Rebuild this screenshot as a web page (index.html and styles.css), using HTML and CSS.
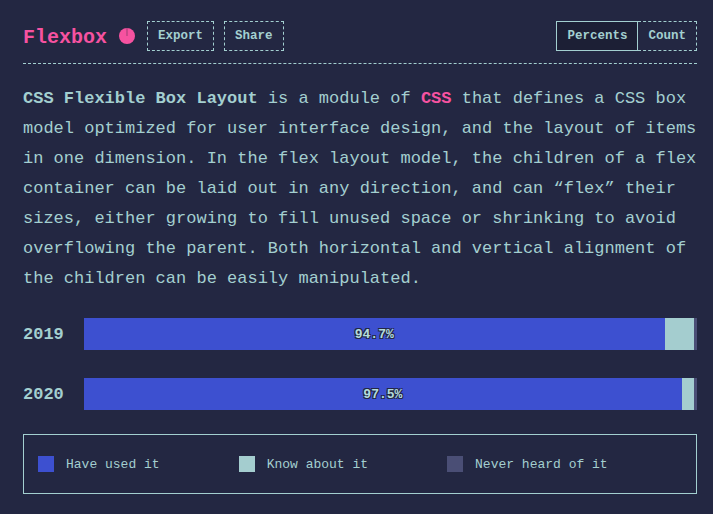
FILE: index.html
```html
<!DOCTYPE html>
<html>
  <head>
    <meta charset="UTF-8">
    <meta name="viewport" content="width=device-width, initial-scale=1.0">
    <title>Flexbox</title>
    <link rel="stylesheet" href="styles.css">
  </head>
  <body>
    <div id="block">
        <div id="header">
            <h2 class="title">Flexbox</h2>
            <svg class="pie" width="16" height="16" viewBox="0 0 16 16">
                <circle cx="8" cy="8" r="8" fill="#f652a0" />
                <line x1="8" y1="8" x2="8" y2="0" stroke="#7a3560" stroke-width="0.7" />
            </svg>
            <span class="btn">Export</span>
            <span class="btn">Share</span>
            <div class="switch">
                <span class="tab active">Percents</span>
                <span class="tab">Count</span>
            </div>
        </div>

        <p class="desc"><strong>CSS Flexible Box Layout</strong> is a module of <strong class="pink">CSS</strong> that defines a CSS box model optimized for user interface design, and the layout of items in one dimension. In the flex layout model, the children of a flex container can be laid out in any direction, and can “flex” their sizes, either growing to fill unused space or shrinking to avoid overflowing the parent. Both horizontal and vertical alignment of the children can be easily manipulated.</p>

        <div class="chart">
            <div class="row">
                <span class="year">2019</span>
                <div class="bar">
                    <div class="seg used" style="width: 94.7%"><span>94.7%</span></div>
                    <div class="seg know" style="width: 4.8%"></div>
                    <div class="seg never" style="width: 0.5%"></div>
                </div>
            </div>
            <div class="row">
                <span class="year">2020</span>
                <div class="bar">
                    <div class="seg used" style="width: 97.5%"><span>97.5%</span></div>
                    <div class="seg know" style="width: 2%"></div>
                    <div class="seg never" style="width: 0.5%"></div>
                </div>
            </div>
        </div>

        <div class="legend">
            <div class="item"><span class="swatch used"></span>Have used it</div>
            <div class="item"><span class="swatch know"></span>Know about it</div>
            <div class="item"><span class="swatch never"></span>Never heard of it</div>
        </div>
    </div>
  </body>
</html>
```

FILE: styles.css
```css
body {
    background-color: #232742;
    color: #a3cfd0;
    font-family: "Liberation Mono", "DejaVu Sans Mono", monospace;
    margin: 0;
    padding: 0;
}

#block {
    padding: 21px 16px 0 23px;
}

#header {
    display: flex;
    flex-direction: row;
    align-items: center;
    padding-bottom: 12px;
    border-bottom: 1px dashed #a3cfd0;
}

.title {
    margin: 0;
    font-size: 20px;
    font-weight: bold;
    color: #f652a0;
    position: relative;
    top: 1px;
}

.pie {
    margin: 0 12px 0 12px;
}

.btn {
    display: flex;
    align-items: center;
    height: 28px;
    padding: 0 10px;
    border: 1px dashed #a3cfd0;
    font-size: 12.5px;
    font-weight: bold;
    margin-right: 10px;
}

.switch {
    display: flex;
    margin-left: auto;
}

.tab {
    display: flex;
    align-items: center;
    height: 28px;
    padding: 0 10px;
    border: 1px dashed #a3cfd0;
    border-left: none;
    font-size: 12.5px;
    font-weight: bold;
}

.tab.active {
    border: 1px solid #a3cfd0;
    background: #1c1f35;
}

.desc {
    margin: 20px 0 0 0;
    font-size: 17px;
    line-height: 30px;
}

.desc strong {
    font-weight: bold;
}

.pink {
    color: #f652a0;
}

.chart {
    margin-top: 24px;
}

.row {
    display: flex;
    align-items: center;
    margin-bottom: 28px;
}

.year {
    width: 61px;
    flex-shrink: 0;
    font-size: 17px;
    font-weight: bold;
}

.bar {
    flex: 1;
    display: flex;
    height: 32px;
}

.seg {
    height: 100%;
    display: flex;
    align-items: center;
    justify-content: center;
}

.seg span {
    font-size: 13px;
    font-weight: bold;
    color: #b4dcdd;
    text-shadow: -1px -1px 0 #232742, 1px -1px 0 #232742, -1px 1px 0 #232742, 1px 1px 0 #232742;
}

.used {
    background: #3d50d0;
}

.know {
    background: #a4cdcf;
}

.never {
    background: #4a4e75;
}

.legend {
    display: flex;
    align-items: center;
    gap: 79px;
    height: 58px;
    margin-top: -4px;
    padding: 0 14px;
    border: 1px solid #a3cfd0;
}

.item {
    display: flex;
    align-items: center;
    font-size: 13px;
}

.swatch {
    width: 16px;
    height: 16px;
    margin-right: 12px;
}
```
